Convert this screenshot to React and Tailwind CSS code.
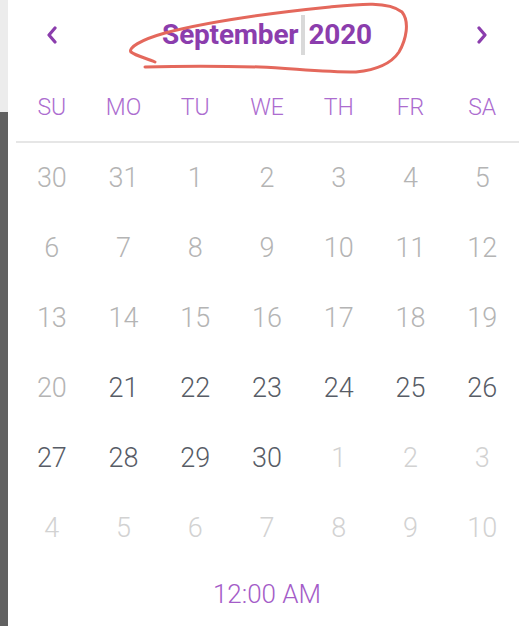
import React from "react";

const weekdays = ["SU", "MO", "TU", "WE", "TH", "FR", "SA"];

// each cell: [label, kind] — kind: "off" disabled, "on" selectable, "next" next month
const weeks = [
  [["30", "off"], ["31", "off"], ["1", "off"], ["2", "off"], ["3", "off"], ["4", "off"], ["5", "off"]],
  [["6", "off"], ["7", "off"], ["8", "off"], ["9", "off"], ["10", "off"], ["11", "off"], ["12", "off"]],
  [["13", "off"], ["14", "off"], ["15", "off"], ["16", "off"], ["17", "off"], ["18", "off"], ["19", "off"]],
  [["20", "off"], ["21", "on"], ["22", "on"], ["23", "on"], ["24", "on"], ["25", "on"], ["26", "on"]],
  [["27", "on"], ["28", "on"], ["29", "on"], ["30", "on"], ["1", "next"], ["2", "next"], ["3", "next"]],
  [["4", "next"], ["5", "next"], ["6", "next"], ["7", "next"], ["8", "next"], ["9", "next"], ["10", "next"]],
];

const dayColor = {
  off: "text-[#b4b4b4]",
  on: "text-[#575c66]",
  next: "text-[#d2d2d2]",
};

function Chevron({ dir }) {
  return (
    <svg width="14" height="18" viewBox="0 0 14 18" className="text-[#8b3dad]">
      <polyline
        points={dir === "left" ? "10,2 4,9 10,16" : "4,2 10,9 4,16"}
        fill="none"
        stroke="currentColor"
        strokeWidth="3.2"
        strokeLinecap="round"
        strokeLinejoin="round"
      />
    </svg>
  );
}

export default function App() {
  return (
    <div className="flex w-[526px] h-[626px] bg-white overflow-hidden font-['Roboto','Liberation_Sans',sans-serif]">
      {/* side strip of the page behind */}
      <div className="w-[8px] flex flex-col">
        <div className="h-[112px] bg-[#ececec]" />
        <div className="flex-1 bg-[#616161]" />
      </div>

      <div className="flex-1 flex flex-col px-[8px]">
        {/* HEADER */}
        <div className="relative h-[70px] flex items-center justify-between">
          <div className="w-[72px] flex justify-center">
            <Chevron dir="left" />
          </div>
          <div className="flex items-center text-[28px] font-bold text-[#8b3dad] tracking-[-0.2px]">
            <span>September</span>
            <span className="inline-block w-[4px] h-[40px] bg-[#d9d9d9] mx-[3px]" />
            <span>2020</span>
          </div>
          <div className="w-[72px] flex justify-center">
            <Chevron dir="right" />
          </div>

          {/* hand-drawn marker loop, drawn in page coordinates */}
          <svg
            className="absolute left-[-16px] top-0 pointer-events-none"
            width="526"
            height="80"
            viewBox="0 0 526 80"
          >
            <path
              d="M155 62 C146 58 136 56 131 52 C128 48 140 40 165 33 C200 24 260 14 330 7 C360 4 388 1 402 12 C410 22 406 40 399 52 C391 64 376 70 356 72 C320 72 290 68 260 67 C220 66 180 66 145 67"
              fill="none"
              stroke="#e4685c"
              strokeWidth="3"
              strokeLinecap="round"
              strokeLinejoin="round"
            />
          </svg>
        </div>

        {/* WEEKDAYS */}
        <div className="grid grid-cols-7 h-[40px] mt-[18px] items-center">
          {weekdays.map((d) => (
            <div key={d} className="text-center text-[23px] font-light text-[#ac6ccf]">
              {d}
            </div>
          ))}
        </div>
        <div className="h-[2px] bg-[#e6e6e6] mt-[13px] mr-[-1px]" />

        {/* DAYS */}
        <div className="flex flex-col">
          {weeks.map((week, wi) => (
            <div key={wi} className="grid grid-cols-7 h-[70px] items-center">
              {week.map(([label, kind], di) => (
                <div key={di} className={`text-center text-[27px] font-light ${dayColor[kind]}`}>
                  {label}
                </div>
              ))}
            </div>
          ))}
        </div>

        {/* TIME */}
        <div className="h-[62px] flex items-center justify-center text-[26px] font-light text-[#a45cc8]">
          12:00 AM
        </div>
      </div>
    </div>
  );
}
